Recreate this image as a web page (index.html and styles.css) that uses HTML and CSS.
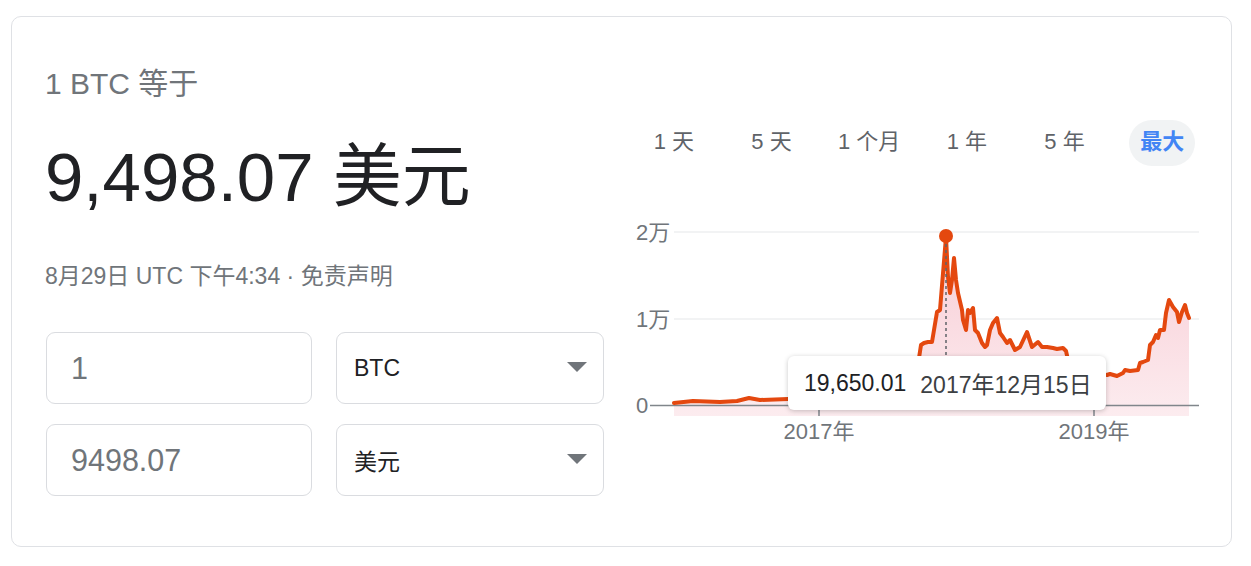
FILE: index.html
```html
<!DOCTYPE html>
<html lang="zh-CN">
<head>
<meta charset="utf-8">
<title>BTC 换算</title>
<link rel="stylesheet" href="styles.css">
</head>
<body>
<div class="card">
  <div class="left">
    <div class="title">1 BTC 等于</div>
    <div class="amount">9,498.07 美元</div>
    <div class="meta">8月29日 UTC 下午4:34 · 免责声明</div>
    <div class="form">
      <div class="box field">1</div>
      <div class="box select"><span>BTC</span><i class="caret"></i></div>
      <div class="box field">9498.07</div>
      <div class="box select"><span>美元</span><i class="caret"></i></div>
    </div>
  </div>
  <div class="right">
    <div class="tabs">
      <div class="tab"><span>1 天</span></div>
      <div class="tab"><span>5 天</span></div>
      <div class="tab"><span>1 个月</span></div>
      <div class="tab"><span>1 年</span></div>
      <div class="tab"><span>5 年</span></div>
      <div class="tab"><span class="active">最大</span></div>
    </div>
    <div class="chart">
      <svg class="plot" width="586" height="260" viewBox="625 190 586 260">
        <defs>
          <linearGradient id="fill" x1="0" y1="0" x2="0" y2="1">
            <stop offset="0" stop-color="#f8ccd5"/>
            <stop offset="1" stop-color="#fcecef"/>
          </linearGradient>
        </defs>
        <line x1="674" y1="232" x2="1199" y2="232" class="grid"/>
        <line x1="674" y1="319" x2="1199" y2="319" class="grid"/>
        <polygon class="area" points="674,403 693,401 720,402 737,401 745,399 749,398 760,400 788,399 820,398 850,397 880,395 900,390 910,380 916,365 919,358 921,345 924,343 928,342 932,342 937,312 940,310 946,237 948,277 950,293 952,280 954,258 956,280 958,293 962,310 963,320 966,330 968,310 970,313 973,308 975,330 978,333 982,343 985,347 987,345 990,330 993,323 997,318 1000,333 1003,337 1007,343 1010,340 1015,350 1020,347 1027,332 1032,347 1038,342 1042,347 1047,347 1053,348 1057,349 1063,348 1066,351 1068,360 1075,372 1090,375 1100,374 1107,375 1110,374 1117,376 1123,373 1125,370 1130,371 1138,370 1140,363 1143,362 1148,360 1150,345 1153,342 1156,335 1158,338 1160,330 1164,330 1166,313 1169,300 1173,307 1177,312 1179,322 1182,312 1185,305 1187,313 1189,318 1189,416 674,416"/>
        <line x1="650" y1="405.5" x2="1199" y2="405.5" class="axis"/>
        <line x1="819" y1="405" x2="819" y2="416" class="axis"/>
        <line x1="1094" y1="405" x2="1094" y2="416" class="axis"/>
        <polyline class="price" points="674,403 693,401 720,402 737,401 745,399 749,398 760,400 788,399 820,398 850,397 880,395 900,390 910,380 916,365 919,358 921,345 924,343 928,342 932,342 937,312 940,310 946,237 948,277 950,293 952,280 954,258 956,280 958,293 962,310 963,320 966,330 968,310 970,313 973,308 975,330 978,333 982,343 985,347 987,345 990,330 993,323 997,318 1000,333 1003,337 1007,343 1010,340 1015,350 1020,347 1027,332 1032,347 1038,342 1042,347 1047,347 1053,348 1057,349 1063,348 1066,351 1068,360 1075,372 1090,375 1100,374 1107,375 1110,374 1117,376 1123,373 1125,370 1130,371 1138,370 1140,363 1143,362 1148,360 1150,345 1153,342 1156,335 1158,338 1160,330 1164,330 1166,313 1169,300 1173,307 1177,312 1179,322 1182,312 1185,305 1187,313 1189,318"/>
        <line x1="946" y1="244" x2="946" y2="405" class="guide"/>
        <circle cx="946" cy="236" r="7" class="dot"/>
        <text x="636" y="240" class="ylab">2万</text>
        <text x="636" y="327" class="ylab">1万</text>
        <text x="636" y="413" class="ylab">0</text>
        <text x="819" y="439" class="xlab">2017年</text>
        <text x="1094" y="439" class="xlab">2019年</text>
      </svg>
      <div class="tooltip">
        <span class="tip-value">19,650.01</span>
        <span class="tip-date">2017年12月15日</span>
      </div>
    </div>
  </div>
</div>
</body>
</html>
```
FILE: styles.css
```css
* {
  box-sizing: border-box;
}

html, body {
  margin: 0;
  padding: 0;
  background: #ffffff;
}

body {
  font-family: "Liberation Sans", "Noto Sans CJK SC", sans-serif;
  color: #202124;
}

.card {
  margin: 16px 0 0 11px;
  width: 1221px;
  height: 531px;
  border: 1px solid #dfe1e5;
  border-radius: 10px;
  display: flex;
  padding: 0 20px 0 33px;
}

.left {
  width: 558px;
  padding-top: 50px;
  flex: none;
}

.title {
  font-size: 30px;
  line-height: 34px;
  color: #70757a;
}

.amount {
  margin-top: 37px;
  font-size: 69px;
  line-height: 80px;
  color: #202124;
}

.meta {
  margin-top: 44px;
  font-size: 23px;
  line-height: 28px;
  color: #70757a;
}

.form {
  margin-top: 42px;
  margin-left: 1px;
  display: grid;
  grid-template-columns: 266px 268px;
  grid-auto-rows: 72px;
  column-gap: 24px;
  row-gap: 20px;
}

.box {
  border: 1px solid #dadce0;
  border-radius: 9px;
  display: flex;
  align-items: center;
}

.field {
  padding-left: 24px;
  font-size: 30.5px;
  color: #70757a;
}

.select {
  padding: 0 16px 0 17px;
  font-size: 23px;
  color: #202124;
  justify-content: space-between;
}

.caret {
  width: 0;
  height: 0;
  border-left: 10px solid transparent;
  border-right: 10px solid transparent;
  border-top: 10px solid #70757a;
  margin-top: -2px;
}

.right {
  width: 586px;
  margin-left: 22px;
  flex: none;
  padding-top: 103px;
}

.tabs {
  display: grid;
  grid-template-columns: repeat(6, 1fr);
  height: 46px;
}

.tab {
  display: flex;
  justify-content: center;
  align-items: center;
  font-size: 22px;
  line-height: 26px;
  color: #5f6368;
  padding-bottom: 3px;
}

.tab .active {
  display: inline-block;
  width: 66px;
  height: 46px;
  line-height: 44px;
  text-align: center;
  border-radius: 23px;
  background: #f1f3f4;
  color: #4285f4;
  font-weight: bold;
  margin-bottom: -3px;
}

.chart {
  position: relative;
  margin-top: 24px;
  height: 260px;
}

.plot {
  display: block;
}

.grid {
  stroke: #eeeff1;
  stroke-width: 1.5;
}

.axis {
  stroke: #80868b;
  stroke-width: 1.5;
}

.area {
  fill: url(#fill);
  stroke: none;
}

.price {
  fill: none;
  stroke: #e4480f;
  stroke-width: 4;
  stroke-linejoin: round;
  stroke-linecap: round;
}

.guide {
  stroke: #5f6368;
  stroke-width: 1.5;
  stroke-dasharray: 3 3;
}

.dot {
  fill: #e4480f;
}

.ylab,
.xlab {
  font-family: "Liberation Sans", "Noto Sans CJK SC", sans-serif;
  font-size: 22px;
  fill: #70757a;
}

.xlab {
  text-anchor: middle;
}

.tooltip {
  position: absolute;
  left: 163px;
  top: 166px;
  width: 318px;
  height: 54px;
  background: #ffffff;
  border-radius: 6px;
  box-shadow: 0 1px 5px rgba(0, 0, 0, 0.22);
  display: flex;
  align-items: center;
  padding-left: 16px;
  gap: 14px;
  font-size: 23px;
}

.tip-value {
  color: #202124;
}

.tip-date {
  color: #3c4043;
}
```
